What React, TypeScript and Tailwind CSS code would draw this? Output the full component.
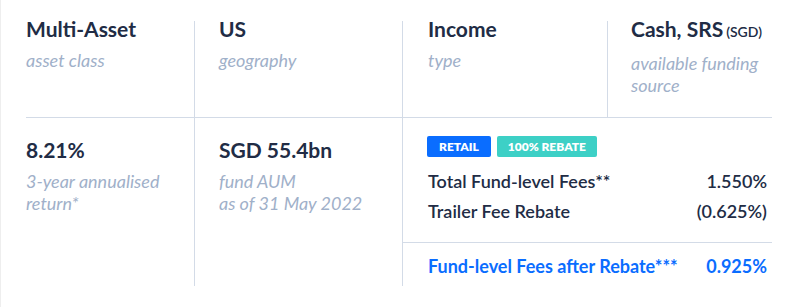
const TOP = [
  { title: "Multi-Asset", sub: ["asset class"] },
  { title: "US", sub: ["geography"] },
  { title: "Income", sub: ["type"] },
  { title: "Cash, SRS", unit: "(SGD)", sub: ["available funding", "source"] },
];

const CELL_PAD = ["", "pl-[24px]", "pl-[25px]", "pl-[23px]"];

function Title({ children }: { children: React.ReactNode }) {
  return (
    <p className="text-[21px] leading-[16px] font-bold text-[#212c45]">{children}</p>
  );
}

function Sub({ lines }: { lines: string[] }) {
  return (
    <p className="mt-[12px] text-[18px] leading-[22px] italic text-[#a0b0c9]">
      {lines.map((l) => (
        <span key={l} className="block">
          {l}
        </span>
      ))}
    </p>
  );
}

export default function App() {
  return (
    <div className="h-[307px] w-[802px] border-l border-[#eeeeee] bg-white pl-[25px] pt-[21px] font-['Lato',sans-serif]">
      {/* Top facts */}
      <div className="grid grid-cols-[168px_208px_205px_165px]">
        {TOP.map((t, i) => (
          <div
            key={t.title}
            className={`pb-[21px] ${i > 0 ? "border-l border-[#d3dbe7]" : ""} ${CELL_PAD[i]}`}
          >
            <Title>
              {t.title}
              {t.unit && (
                <span className="ml-[3px] text-[14px] font-semibold">{t.unit}</span>
              )}
            </Title>
            <Sub lines={t.sub} />
          </div>
        ))}
      </div>

      {/* Performance + fees */}
      <div className="grid w-[746px] grid-cols-[168px_208px_370px] border-t border-[#d3dbe7]">
        <div className="pt-[24px]">
          <Title>8.21%</Title>
          <Sub lines={["3-year annualised", "return*"]} />
        </div>
        <div className="border-l border-[#d3dbe7] pl-[24px] pt-[24px]">
          <Title>SGD 55.4bn</Title>
          <Sub lines={["fund AUM", "as of 31 May 2022"]} />
        </div>
        <div className="border-l border-[#d3dbe7]">
          <div className="pl-[24px] pr-[5px] pt-[18px] pb-[16px]">
            <div className="mb-[10px] flex gap-[6px]">
              <span className="rounded-[2px] bg-[#0a6dff] px-[12px] text-[12px] leading-[21px] font-extrabold text-white">
                RETAIL
              </span>
              <span className="rounded-[2px] bg-[#3dd0c6] px-[11px] text-[12px] leading-[21px] font-extrabold text-white">
                100% REBATE
              </span>
            </div>
            <div className="flex justify-between pl-px text-[18px] leading-[29.5px] font-semibold text-[#212c45]">
              <span>Total Fund-level Fees**</span>
              <span>1.550%</span>
            </div>
            <div className="flex justify-between pl-px text-[18px] leading-[29.5px] font-semibold text-[#212c45]">
              <span>Trailer Fee Rebate</span>
              <span>(0.625%)</span>
            </div>
          </div>
          <div className="flex justify-between border-t border-[#d3dbe7] pl-[25px] pr-[5px] pt-[9px] pb-[5px] text-[18px] leading-[29px] font-bold text-[#0a6dff]">
            <span>Fund-level Fees after Rebate***</span>
            <span>0.925%</span>
          </div>
        </div>
      </div>
    </div>
  );
}
